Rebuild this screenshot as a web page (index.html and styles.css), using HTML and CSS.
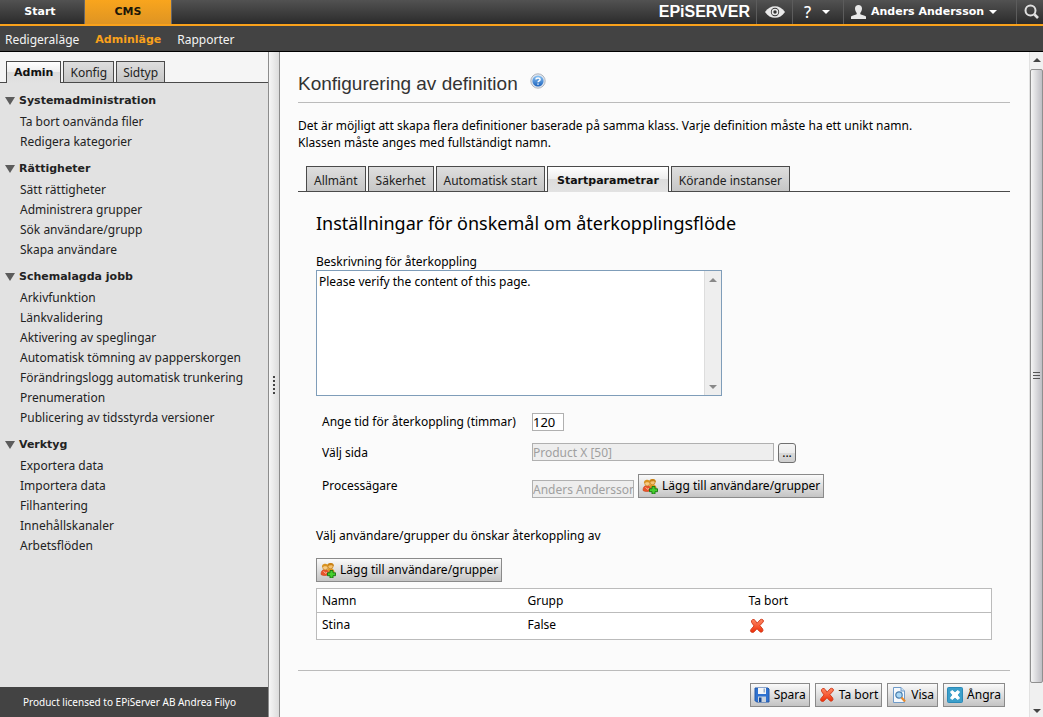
FILE: index.html
```html
<!DOCTYPE html>
<html lang="sv">
<head>
<meta charset="utf-8">
<title>EPiServer CMS - Konfigurering av definition</title>
<link rel="stylesheet" href="styles.css">
</head>
<body>
<svg class="sprite" aria-hidden="true">
  <defs>
    <linearGradient id="red" x1="0" y1="0" x2="0" y2="1"><stop offset="0" stop-color="#ff8a66"/><stop offset="1" stop-color="#ee2e08"/></linearGradient>
    <linearGradient id="blue" x1="0" y1="0" x2="0" y2="1"><stop offset="0" stop-color="#8cc4f4"/><stop offset="1" stop-color="#1b62bd"/></linearGradient>
    <symbol id="cross" viewBox="0 0 16 16"><path d="M3.600 1.500Q5.500 1.200 6.200 2.500L8.100 5.200 11 1.900Q12.600.7 14 1.900 15 3 14 4.100L10.900 7.600 13.700 11Q14.500 12.600 13.200 13.800 11.900 14.700 10.700 13.600L8 10.700 5 13.900Q3.600 15 2.100 14 .9 12.700 2 11.400L5 7.900 2.700 4.600Q1.800 2.600 3.600 1.500Z" fill="url(#red)" stroke="#cf3515" stroke-width=".9" stroke-linejoin="round"/></symbol>
    <symbol id="adduser" viewBox="0 0 16 16">
      <path d="M7 7c2-2 7-1 7.500 2.500v1H9z" fill="#e39a23"/>
      <circle cx="10.500" cy="4.200" r="2.600" fill="#f3c272" stroke="#c07c1a" stroke-width=".7"/>
      <path d="M7 4.500c0-3 2-3.700 4-3.500 2 .1 3.200 1.500 2.900 3.500-1-1.500-4.300-1.700-6.900 0z" fill="#c98216"/>
      <path d="M1 12.500C1 8.500 3 7.500 5 7.500s4 1.500 4 4.500c-2 2-6 2-8 .5z" fill="#e9532a" stroke="#c8441b" stroke-width=".6"/>
      <path d="M3.500 9.500 6 11.500 7 10" fill="none" stroke="#f9b9a0"/>
      <circle cx="5.200" cy="5.400" r="2.500" fill="#f7cb84" stroke="#c07c1a" stroke-width=".6"/>
      <path d="M2 5.500C1.800 2.500 3.500 1.700 5.200 1.700s3.300 1.100 3.100 3.800C6.500 3.600 3.500 4 2 5.500z" fill="#d89220"/>
      <path d="M10 8.500h3v2.300h2.500v2.900H13V16h-3v-2.300H7.500v-2.900H10z" fill="#45cf2e" stroke="#14720f" stroke-width=".9"/>
    </symbol>
  </defs>
</svg>
<div class="page">
  <header>
    <nav class="topbar">
      <a class="product" href="#">Start</a>
      <a class="product current" href="#">CMS</a>
      <div class="tools">
        <span class="logo">EPiSERVER</span>
        <button class="tool eye" type="button" aria-label="Visa">
          <svg width="20" height="12" viewBox="0 0 20 12"><path d="M0 6C5-1.800 15-1.800 20 6 15 13.800 5 13.800 0 6z" fill="#e8e8e8"/><circle cx="10" cy="6" r="4.200" fill="#333"/><circle cx="10" cy="6" r="3.300" fill="#e8e8e8"/><circle cx="10" cy="6" r="1.700" fill="#333"/></svg>
        </button>
        <button class="tool help" type="button"><span>?</span><i class="caret"></i></button>
        <button class="tool user" type="button">
          <svg width="15" height="14" viewBox="0 0 15 14"><path d="M7.500 0C9.600 0 11 1.300 11 3.500 11 6 9.800 7 9.300 8v1.300c1.500.7 4.200 1 5.700 2.200V14H0v-2.500c1.500-1.200 4.200-1.500 5.700-2.200V8C5.200 7 4 6 4 3.500 4 1.300 5.400 0 7.500 0z" fill="#e8e8e8"/></svg>
          <span>Anders Andersson</span><i class="caret"></i>
        </button>
        <button class="tool search" type="button" aria-label="Sök">
          <svg width="16" height="16" viewBox="0 0 16 16"><circle cx="6.500" cy="6.500" r="5" fill="none" stroke="#e0e0e0" stroke-width="2"/><path d="M10.500 10.500 14 14" stroke="#e0e0e0" stroke-width="2.600"/></svg>
        </button>
      </div>
    </nav>
    <nav class="subnav"><a href="#">Redigeraläge</a><a class="current" href="#">Adminläge</a><a href="#">Rapporter</a></nav>
  </header>
  <div class="workspace">
    <aside class="sidebar">
      <nav class="tabs side-tabs"><a class="tab active" href="#">Admin</a><a class="tab" href="#">Konfig</a><a class="tab" href="#">Sidtyp</a></nav>
      <nav class="menu">
        <section><h2>Systemadministration</h2><ul><li><a href="#">Ta bort oanvända filer</a></li><li><a href="#">Redigera kategorier</a></li></ul></section>
        <section><h2>Rättigheter</h2><ul><li><a href="#">Sätt rättigheter</a></li><li><a href="#">Administrera grupper</a></li><li><a href="#">Sök användare/grupp</a></li><li><a href="#">Skapa användare</a></li></ul></section>
        <section><h2>Schemalagda jobb</h2><ul><li><a href="#">Arkivfunktion</a></li><li><a href="#">Länkvalidering</a></li><li><a href="#">Aktivering av speglingar</a></li><li><a href="#">Automatisk tömning av papperskorgen</a></li><li><a href="#">Förändringslogg automatisk trunkering</a></li><li><a href="#">Prenumeration</a></li><li><a href="#">Publicering av tidsstyrda versioner</a></li></ul></section>
        <section><h2>Verktyg</h2><ul><li><a href="#">Exportera data</a></li><li><a href="#">Importera data</a></li><li><a href="#">Filhantering</a></li><li><a href="#">Innehållskanaler</a></li><li><a href="#">Arbetsflöden</a></li></ul></section>
      </nav>
      <footer class="license">Product licensed to EPiServer AB Andrea Filyo</footer>
    </aside>
    <div class="splitter"><svg width="2" height="18" viewBox="0 0 2 18"><path d="M1 0v18" stroke="#444" stroke-width="2" stroke-dasharray="2 2"/></svg></div>
    <main class="content">
      <div class="title">
        <h1>Konfigurering av definition</h1>
        <svg width="16" height="16" viewBox="0 0 16 16" role="img" aria-label="Hjälp"><circle cx="8" cy="8" r="7.200" fill="#dfe5ee" stroke="#a9afb8" stroke-width=".9"/><circle cx="8" cy="8" r="5.600" fill="url(#blue)"/><path d="M5.900 6.500C6 4.500 10.200 4.400 10.100 6.600 10 7.800 8 7.900 8 9.300M8 10.400v1.400" fill="none" stroke="#fff" stroke-width="1.400"/></svg>
      </div>
      <p class="intro">Det är möjligt att skapa flera definitioner baserade på samma klass. Varje definition måste ha ett unikt namn.<br>Klassen måste anges med fullständigt namn.</p>
      <nav class="tabs main-tabs"><a class="tab" href="#">Allmänt</a><a class="tab" href="#">Säkerhet</a><a class="tab" href="#">Automatisk start</a><a class="tab active" href="#">Startparametrar</a><a class="tab" href="#">Körande instanser</a></nav>
      <form class="form">
        <h2>Inställningar för önskemål om återkopplingsflöde</h2>
        <label class="desc-label" for="desc">Beskrivning för återkoppling</label>
        <div class="memo">
          <textarea id="desc">Please verify the content of this page.</textarea>
          <div class="memo-bar"><i class="arrow up"></i><i class="arrow down"></i></div>
        </div>
        <div class="fields">
          <label for="hours">Ange tid för återkoppling (timmar)</label>
          <div class="control"><input id="hours" class="hours" type="text" value="120"></div>
          <label for="pageref">Välj sida</label>
          <div class="control pick"><input id="pageref" class="pageref" type="text" value="Product X [50]" disabled><button class="dots" type="button">...</button></div>
          <label for="owner">Processägare</label>
          <div class="control owner-row"><input id="owner" class="owner" type="text" value="Anders Andersson" disabled><button class="btn" type="button"><svg width="16" height="16"><use href="#adduser"/></svg>Lägg till användare/grupper</button></div>
        </div>
        <p class="ask">Välj användare/grupper du önskar återkoppling av</p>
        <button class="btn" type="button"><svg width="16" height="16"><use href="#adduser"/></svg>Lägg till användare/grupper</button>
        <table class="people">
          <thead><tr><th>Namn</th><th>Grupp</th><th>Ta bort</th></tr></thead>
          <tbody><tr><td>Stina</td><td>False</td><td><button class="remove" type="button" aria-label="Ta bort Stina"><svg width="16" height="16"><use href="#cross"/></svg></button></td></tr></tbody>
        </table>
      </form>
      <div class="actions">
        <button class="btn" type="button"><svg width="16" height="16" viewBox="0 0 16 16"><path d="M1 1h13l1 1v13H2.500L1 13.500z" fill="#2f72d0" stroke="#2559a8"/><path d="M4 1h8v6H4z" fill="#f4f6f8"/><path d="M9.500 1.500h1.500v4H9.500z" fill="#9db0c8"/><path d="M4 9.500h8V15H4z" fill="#c9d2dd"/><path d="M5 10.500h2.500V15H5z" fill="#174a96"/></svg>Spara</button>
        <button class="btn" type="button"><svg width="16" height="16"><use href="#cross"/></svg>Ta bort</button>
        <button class="btn" type="button"><svg width="16" height="16" viewBox="0 0 16 16"><path d="M2.500.5H10L13.500 4v11.500h-11z" fill="#f5f9fd" stroke="#6f9bc9"/><path d="M10 .5V4h3.500" fill="#cfe0f1" stroke="#6f9bc9"/><circle cx="8" cy="8" r="3.200" fill="#a9d7f5" stroke="#4c7fae" stroke-width="1.200"/><path d="m10.500 10.500 3.500 4" stroke="#e98a2c" stroke-width="2.200"/></svg>Visa</button>
        <button class="btn" type="button"><svg width="16" height="16" viewBox="0 0 16 16"><rect x=".5" y=".5" width="15" height="15" rx="1" fill="#3c9fca" stroke="#2b8ab8"/><path d="m5 3.500 3 2.300 3-2.300 1.500 1.500-2.300 3 2.300 3-1.500 1.500-3-2.300-3 2.300L3.500 11l2.300-3-2.300-3z" fill="#fff" stroke="#fff" stroke-linejoin="round"/></svg>Ångra</button>
      </div>
    </main>
    <div class="scrollbar">
      <i class="arrow up dark"></i>
      <div class="thumb"><svg width="7" height="8" viewBox="0 0 7 8"><path d="M0 .5h7M0 3.500h7M0 6.500h7" stroke="#555"/></svg></div>
      <i class="arrow down dark"></i>
    </div>
  </div>
</div>
</body>
</html>
```
FILE: styles.css
```css
* { box-sizing: border-box; }
body { margin: 0; font: 12px/16px "Noto Sans", "Open Sans", sans-serif; color: #000; }
a { color: inherit; text-decoration: none; }
button, input, textarea { font: inherit; color: inherit; margin: 0; }
h1, h2, p, ul { margin: 0; padding: 0; }
.sprite { position: absolute; width: 0; height: 0; }
.page { display: flex; flex-direction: column; min-height: 100vh; }

.product, .user, .subnav .current, .tab.active, .menu h2 { font-family: "DejaVu Sans", sans-serif; font-size: 11px; font-weight: bold; }

.topbar { display: flex; height: 26px; border-bottom: 2px solid #f9a11b; background: linear-gradient(#525252, #2b2b2b); color: #fff; }
.product { width: 84px; line-height: 24px; text-align: center; padding-right: 4px; }
.product.current { width: 88px; padding: 0; background: linear-gradient(#f9a51d, #de9423); color: #1c1608; border: solid #66666a; border-width: 0 1px; }
.tools { display: flex; margin-left: auto; }
.logo { font: bold 16px/24px "Liberation Sans", sans-serif; padding-right: 6px; }
.tool { display: flex; align-items: center; border: 0; border-left: 1px solid #5c5c5c; background: none; padding: 0; color: #fff; }
.eye { width: 36px; padding-left: 8px; }
.help { width: 51px; padding-left: 11px; gap: 11px; font-size: 16px; font-weight: 500; }
.user { width: 173px; padding-left: 7px; gap: 5px; }
.search { width: 27px; padding-left: 7px; }
.caret { border: 4px solid transparent; border-top-color: #fff; border-bottom: 0; }
.subnav { display: flex; gap: 16px; height: 26px; padding-left: 5px; border-bottom: 1px solid #000; background: #434343; color: #f4f4f4; line-height: 27px; }
.subnav .current { color: #f9a11b; }

.workspace { flex: 1; display: flex; }
.sidebar { width: 268px; display: flex; flex-direction: column; background: #e2e2e2; color: #222; }
.tabs { display: flex; align-items: flex-end; gap: 2px; border-bottom: 1px solid #4a4a4a; }
.tab { border: 1px solid #4a4a4a; border-bottom: 0; padding: 0 7px; background: linear-gradient(#dedede, #c6c6c6); color: #222; white-space: nowrap; }
.tab.active { color: #111; background: linear-gradient(#fff, #ececec 50%, #dcdcdc 50%, #e2e2e2); margin-bottom: -1px; }
.side-tabs { padding: 9px 0 0 6px; background: #f5f5f5; line-height: 22px; height: 31px; }
.side-tabs .tab { height: 21px; padding-left: 6px; padding-right: 6px; }
.side-tabs .tab.active { height: 22px; padding: 0 7px; }
.menu { padding-top: 7px; flex: 1; }
.menu section { margin-bottom: 6px; }
.menu h2 { display: flex; align-items: center; gap: 4px; padding-left: 5px; line-height: 22px; }
.menu h2::before { content: ""; border: 5px solid transparent; border-top: 8px solid #5c5c5c; border-bottom: 0; }
.menu ul { list-style: none; }
.menu li { padding-left: 20px; line-height: 20px; }
.license { background: #434343; color: #fff; font-size: 10px; line-height: 30px; padding-left: 23px; }
.splitter { width: 12px; display: flex; align-items: center; justify-content: center; border: solid #8c8c8c; border-width: 0 1px; background: linear-gradient(90deg, #f6f6f6, #dcdcdc); }

.content { flex: 1; min-width: 0; background: #fbfbfb; padding: 0 19px 0 18px; }
.title { display: flex; align-items: center; gap: 12px; height: 51px; padding-top: 13px; border-bottom: 1px solid #bbb; }
.title svg { margin-bottom: 6px; }
h1 { font: 19px/24px "Liberation Sans", sans-serif; color: #333; }
.intro { line-height: 17px; padding: 14px 0 15px; }
.main-tabs { padding-left: 8px; line-height: 28px; height: 26px; }
.main-tabs .tab { height: 25px; }
.main-tabs .tab.active { height: 26px; padding: 0 9px; }
.form { padding: 19px 18px 30px; }
.form h2 { font-size: 18px; line-height: 24px; font-weight: normal; margin-bottom: 18px; }
.desc-label { display: block; line-height: 17px; }
.memo { display: flex; width: 406px; height: 126px; border: 1px solid #7f9db9; background: #fff; }
.memo textarea { flex: 1; border: 0; padding: 3px 2px; resize: none; overflow: hidden; background: none; outline: 0; }
.memo-bar { width: 17px; display: flex; flex-direction: column; align-items: center; justify-content: space-between; padding: 7px 0 6px; background: #eee; border-left: 1px solid #ddd; }
.arrow { border: 4px solid transparent; }
.arrow.up { border-top: 0; border-bottom-color: #888; }
.arrow.down { border-bottom: 0; border-top-color: #888; }
.arrow.up.dark { border-bottom-color: #444; }
.arrow.down.dark { border-top-color: #444; }
.fields { display: grid; grid-template-columns: 210px 1fr; grid-template-rows: 20px 22px 24px; row-gap: 10px; align-items: center; margin-top: 16px; padding-left: 6px; }
.control { display: flex; align-items: center; }
.pick { gap: 4px; }
.owner-row { gap: 4px; align-items: flex-end; }
.control input { height: 18px; border: 1px solid #b0b0b0; padding: 0; background: #fff; }
.control input:disabled { background: #eee; color: #a0a0a0; }
.control .hours { width: 32px; font-size: 13px; }
.control .pageref { width: 242px; align-self: flex-start; }
.control .owner { width: 102px; }
.dots { width: 18px; height: 20px; padding: 0; border: 1px solid #707070; border-radius: 3px; background: linear-gradient(#f4f4f4, #ececec 50%, #dadada 50%, #cfcfcf); }
.btn { display: inline-flex; align-items: center; gap: 4px; height: 24px; padding: 0 3px; border: 1px solid #8a8a8a; background: linear-gradient(#fafafa, #c4c4c4); white-space: nowrap; }
.ask { margin: 30px 0 14px; }
.people { width: 100%; margin-top: 6px; border-collapse: collapse; table-layout: fixed; border: 1px solid #bbb; background: #fff; text-align: left; }
.people th, .people td { height: 24px; padding: 0 5px; font-weight: normal; }
.people td { height: 27px; padding-bottom: 3px; border-top: 1px solid #bbb; }
.people th:nth-child(1) { width: 206px; }
.people th:nth-child(2) { width: 221px; }
.remove { display: block; border: 0; padding: 0; background: none; height: 16px; }
.people td:last-child { padding: 0 5px; }
.actions { display: flex; justify-content: flex-end; gap: 5px; border-top: 1px solid #bbb; padding: 12px 5px 10px 0; }
.scrollbar { width: 14px; display: flex; flex-direction: column; align-items: center; gap: 7px; padding: 6px 0 4px; background: #f0f0f0; border-left: 1px solid #e2e2e2; }
.scrollbar .thumb { flex: 1; width: 100%; margin-bottom: 19px; display: flex; align-items: center; justify-content: center; border: 1px solid #8f8f8f; border-radius: 2px; background: linear-gradient(90deg, #f5f5f5, #d9d9dc 50%, #bebec4); }
```
